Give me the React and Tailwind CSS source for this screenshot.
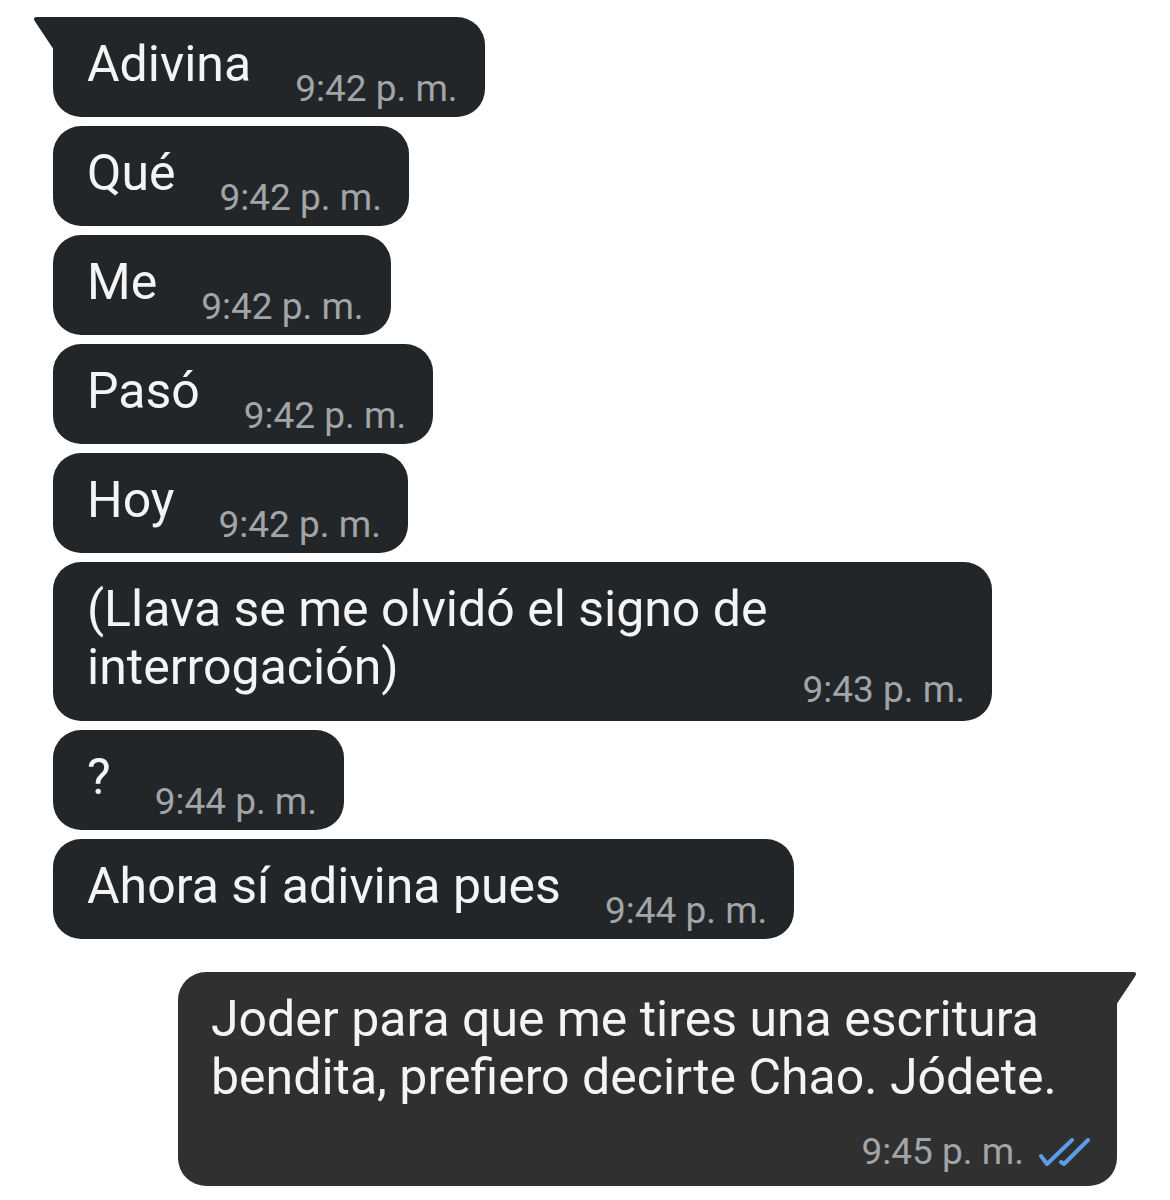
const messages = [
  { text: "Adivina", time: "9:42 p. m.", tail: true },
  { text: "Qué", time: "9:42 p. m." },
  { text: "Me", time: "9:42 p. m." },
  { text: "Pasó", time: "9:42 p. m." },
  { text: "Hoy", time: "9:42 p. m." },
  { text: "(Llava se me olvidó el signo de interrogación)", time: "9:43 p. m.", long: true },
  { text: "?", time: "9:44 p. m." },
  { text: "Ahora sí adivina pues", time: "9:44 p. m." },
];

function TailLeft({ color }) {
  return (
    <svg className="absolute -left-[21px] top-0" width="22" height="33" viewBox="0 0 22 33">
      <path d="M22 0 H5 Q0 0 3 4.5 L22 33 Z" fill={color} />
    </svg>
  );
}

function TailRight({ color }) {
  return (
    <svg className="absolute -right-[21px] top-0" width="22" height="33" viewBox="0 0 22 33">
      <path d="M0 0 H17 Q22 0 19 4.5 L0 33 Z" fill={color} />
    </svg>
  );
}

function DoubleCheck() {
  return (
    <svg width="52" height="30" viewBox="0 0 52 30" fill="none" stroke="#5b9de8" strokeWidth="4" strokeLinecap="round" strokeLinejoin="round">
      <path d="M3 19 L9 27 L34 3" />
      <path d="M23 25 L26 27 L50 3" />
    </svg>
  );
}

function Received({ text, time, tail, long }) {
  const radius = tail ? "rounded-[28px] rounded-tl-none" : "rounded-[28px]";
  if (long) {
    return (
      <div className={`relative max-w-[939px] bg-[#232629] ${radius} pl-[34px] pr-[27px] pt-[18px] pb-[9px]`}>
        <div className="text-[50px] leading-[58px] text-[#f4f4f4]">{text}</div>
        <div className="-mt-[28px] text-right text-[37px] leading-[44px] text-[#a2a5a8]">{time}</div>
      </div>
    );
  }
  return (
    <div className={`relative flex items-end bg-[#232629] ${radius} pl-[34px] pr-[27px] pt-[18px] pb-[6px]`}>
      {tail && <TailLeft color="#232629" />}
      <span className="mb-[18px] text-[50px] leading-[58px] text-[#f4f4f4]">{text}</span>
      <span className="ml-[44px] text-[37px] leading-[44px] text-[#a2a5a8]">{time}</span>
    </div>
  );
}

export default function App() {
  return (
    <div className="min-h-[1200px] bg-white px-[53px] pt-[17px]" style={{ fontFamily: "Roboto, 'Noto Sans', sans-serif" }}>
      <div className="flex flex-col items-start gap-[9px]">
        {messages.map((m, i) => (
          <Received key={i} {...m} />
        ))}
      </div>
      <div className="mt-[33px] flex justify-end">
        <div className="relative max-w-[939px] rounded-[28px] rounded-tr-none bg-[#303031] pl-[33px] pr-[27px] pt-[18px] pb-[12px]">
          <TailRight color="#303031" />
          <div className="text-[50px] leading-[58px] text-[#f4f4f4]">
            Joder para que me tires una escritura bendita, prefiero decirte Chao. Jódete.
          </div>
          <div className="mt-[24px] flex items-center justify-end gap-[14px]">
            <span className="text-[37px] leading-[44px] text-[#a2a5a8]">9:45 p. m.</span>
            <DoubleCheck />
          </div>
        </div>
      </div>
    </div>
  );
}
